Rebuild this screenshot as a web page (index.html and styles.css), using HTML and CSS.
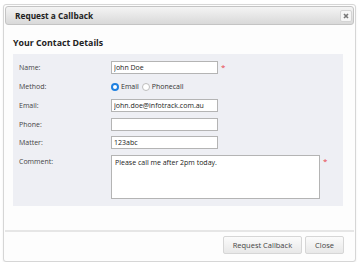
FILE: index.html
```html
<!DOCTYPE html>
<html lang="en">
<head>
    <meta charset="UTF-8">
    <meta name="viewport" content="width=device-width, initial-scale=1.0">
    <title>Request a Callback</title>
    <link rel="stylesheet" href="styles.css">
</head>
<body>
    <div class="dialog">
        <div class="titlebar">
            <span class="title">Request a Callback</span>
            <button class="close-x" title="Close">
                <svg width="6" height="6" viewBox="0 0 6 6"><path d="M1 1L5 5M5 1L1 5" stroke="#777" stroke-width="1.6"/></svg>
            </button>
        </div>

        <div class="content">
            <h2>Your Contact Details</h2>
            <div class="panel">
                <label class="label">Name:</label>
                <div class="field"><input class="text-input" type="text" value="John Doe"><span class="req">*</span></div>

                <label class="label">Method:</label>
                <div class="field radios">
                    <label class="radio"><input type="radio" name="method" checked> Email</label>
                    <label class="radio"><input type="radio" name="method"> Phonecall</label>
                </div>

                <label class="label">Email:</label>
                <div class="field"><input class="text-input" type="text" value="john.doe@infotrack.com.au"></div>

                <label class="label">Phone:</label>
                <div class="field"><input class="text-input" type="text" value=""></div>

                <label class="label">Matter:</label>
                <div class="field"><input class="text-input" type="text" value="123abc"></div>

                <label class="label">Comment:</label>
                <div class="field"><textarea class="comment">Please call me after 2pm today.</textarea><span class="req">*</span></div>
            </div>
        </div>

        <div class="footer">
            <button class="btn">Request Callback</button>
            <button class="btn">Close</button>
        </div>
    </div>
</body>
</html>
```

FILE: styles.css
```css
:root {
    --text-color: #333333;
    --border-color: #c8c8c8;
    --panel-bg: #eeeff4;
    --accent: #1f80e0;
}

* {
    margin: 0;
    padding: 0;
    box-sizing: border-box;
    font-family: "Open Sans", "Liberation Sans", sans-serif;
}

body {
    background: #ffffff;
    color: var(--text-color);
    padding: 4px 4px 0 3px;
}

.dialog {
    width: 353px;
    height: 258px;
    border: 1px solid #d6d6d6;
    border-radius: 3px;
    padding: 1px;
    background: #fdfdfd;
    box-shadow: 0 1px 2px rgb(0 0 0 / 0.08);
}

.titlebar {
    height: 19px;
    display: flex;
    align-items: center;
    justify-content: space-between;
    padding: 0 1px 0 9px;
    border: 1px solid #c4c4c4;
    border-radius: 3px;
    background: linear-gradient(#f4f4f4, #d9d9d9);
}

.title {
    font-size: 8.3px;
    font-weight: bold;
    color: #222;
}

.close-x {
    width: 12px;
    height: 12px;
    display: flex;
    align-items: center;
    justify-content: center;
    border: 1px solid #d4d4d4;
    border-radius: 2px;
    background: #f6f6f6;
}

.content {
    padding: 11px 11px 24px 8px;
}

h2 {
    font-size: 8.8px;
    line-height: 14px;
    font-weight: bold;
    color: #222;
    margin-bottom: 4px;
}

.panel {
    background: var(--panel-bg);
    padding: 7px 6px;
    display: grid;
    grid-template-columns: 92px 1fr;
    row-gap: 5.5px;
    align-items: center;
}

.label {
    font-size: 7px;
    color: #444;
    align-self: start;
    line-height: 13px;
}

.field {
    display: flex;
    align-items: flex-start;
}

.text-input {
    width: 107px;
    height: 13px;
    border: 1px solid #b4b4b4;
    background: #fff;
    font-size: 7px;
    padding: 0 2px;
    color: #222;
    outline: none;
}

.comment {
    width: 209px;
    height: 44px;
    border: 1px solid #b4b4b4;
    background: #fff;
    font-size: 7px;
    padding: 2px 3px;
    color: #222;
    resize: none;
    outline: none;
}

.req {
    color: #e8434a;
    font-size: 8px;
    line-height: 11px;
    margin-left: 3px;
}

.radios {
    height: 14px;
    align-items: center;
    gap: 3px;
}

.radio {
    display: flex;
    align-items: center;
    gap: 2px;
    font-size: 7px;
    color: #333;
}

.radio input {
    appearance: none;
    width: 8px;
    height: 8px;
    border: 1px solid #bdbdbd;
    border-radius: 50%;
    background: #fff;
}

.radio input:checked {
    border: 2.5px solid var(--accent);
    background: #fff;
}

.footer {
    border-top: 2px solid #e6e6e6;
    padding: 4px 10px 0;
    display: flex;
    justify-content: flex-end;
    gap: 3px;
}

.btn {
    height: 18px;
    padding: 0 9px;
    border: 1px solid #d6d6d6;
    border-radius: 2px;
    background: linear-gradient(#fbfbfb, #e8e8e8);
    font-size: 7.5px;
    color: #444;
    cursor: pointer;
}
```
